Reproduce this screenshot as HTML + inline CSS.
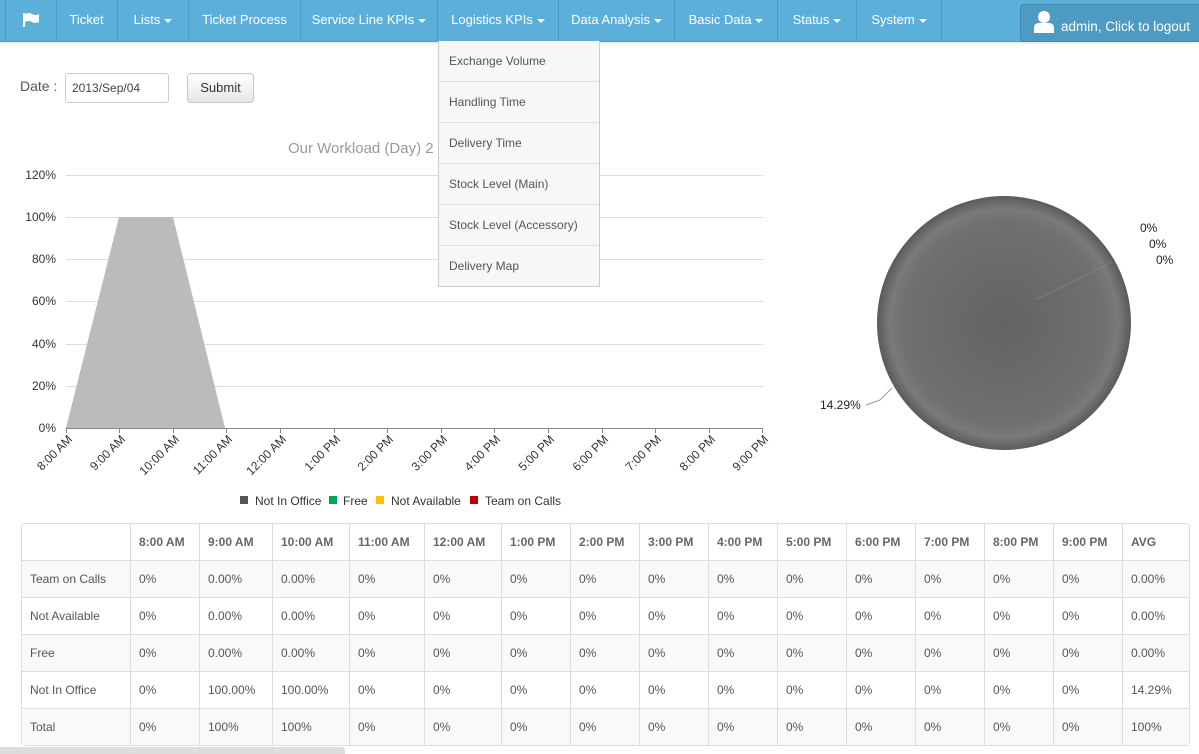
<!DOCTYPE html>
<html><head><meta charset="utf-8"><style>
body{margin:0;width:1199px;height:754px;overflow:hidden;background:#fff;font-family:"Liberation Sans",Arial,sans-serif;position:relative;font-size:12px;color:#555}
.nav{position:absolute;left:0;top:0;width:1199px;height:41px;background:#5cafd9;border-bottom:1px solid #4b9cc6;box-shadow:0 1px 3px rgba(0,0,0,.12);z-index:5}
.nav .it{position:absolute;top:0;height:40px;line-height:39px;color:#fff;font-size:13px;text-align:center;border-right:1px solid #4a9bc4}
.car{display:inline-block;width:0;height:0;border-left:4px solid transparent;border-right:4px solid transparent;border-top:4px solid #fff;vertical-align:middle;margin-left:4px}
.logout{position:absolute;left:1020px;top:4px;width:182px;height:36px;background:#4d9ac2;border:1px solid #3e88b0;border-radius:4px;color:#fff;font-size:13.5px}
.dd{position:absolute;left:438px;top:41px;width:160px;background:#f7f7f7;border:1px solid #ccc;border-top:none;z-index:10}
.dd div{height:40px;line-height:40px;padding-left:10px;border-bottom:1px solid #ddd;font-size:12px;color:#555}
.dd div:last-child{border-bottom:none}
table{position:absolute;left:21px;top:523px;border-collapse:separate;border-spacing:0;border:1px solid #ddd;border-radius:4px;font-size:12px;color:#555;table-layout:fixed}
td,th{border-left:1px solid #ddd;border-top:1px solid #ddd;height:37px;padding:0 0 0 8px;text-align:left;box-sizing:border-box}
th{border-top:none;height:36px;font-weight:bold;color:#666;}
tr td:first-child,tr th:first-child{border-left:none}
tbody tr:nth-child(odd) td{background:#f9f9f9}
</style></head><body>
<div class="nav">
<div class="it" style="border-left:1px solid #4a9bc4;left:5px;width:50px"><svg width="18" height="16" viewBox="0 0 18 16" style="vertical-align:middle;margin-top:-3px"><rect x="1" y="2" width="2" height="14" fill="#fff"/><path d="M3 3 Q7 1 10 3 T17 3 V11 Q13 13 10 11 T3 11Z" fill="#fff"/></svg></div>
<div class="it" style="left:56px;width:61px">Ticket</div>
<div class="it" style="left:118px;width:70px">Lists<span class="car"></span></div>
<div class="it" style="left:189px;width:111px">Ticket Process</div>
<div class="it" style="left:301px;width:136px">Service Line KPIs<span class="car"></span></div>
<div class="it" style="left:438px;width:120px">Logistics KPIs<span class="car"></span></div>
<div class="it" style="left:559px;width:115px">Data Analysis<span class="car"></span></div>
<div class="it" style="left:675px;width:102px">Basic Data<span class="car"></span></div>
<div class="it" style="left:778px;width:78px">Status<span class="car"></span></div>
<div class="it" style="left:857px;width:84px">System<span class="car"></span></div>
<div class="logout"><svg width="22" height="24" viewBox="0 0 22 24" style="position:absolute;left:12px;top:5px"><circle cx="11" cy="7" r="6" fill="#fff"/><path d="M1 23 V18 Q1 13 6 13 H16 Q21 13 21 18 V23Z" fill="#fff"/></svg><span style="position:absolute;left:40px;top:14px">admin, Click to logout</span></div>
</div>
<div class="dd"><div>Exchange Volume</div><div>Handling Time</div><div>Delivery Time</div><div>Stock Level (Main)</div><div>Stock Level (Accessory)</div><div>Delivery Map</div></div>
<div style="position:absolute;left:20px;top:78px;font-size:14px;color:#555">Date :</div>
<div style="position:absolute;left:65px;top:73px;width:104px;height:30px;border:1px solid #ccc;border-radius:3px;box-sizing:border-box;font-size:12px;line-height:28px;padding-left:6px;color:#444">2013/Sep/04</div>
<div style="position:absolute;left:187px;top:73px;width:67px;height:30px;border:1px solid #c5c5c5;border-radius:4px;box-sizing:border-box;background:linear-gradient(#fff,#e6e6e6);font-size:13px;line-height:28px;text-align:center;color:#333">Submit</div>
<svg style="position:absolute;left:0;top:120px" width="800" height="400" viewBox="0 120 800 400" font-family="Liberation Sans,Arial,sans-serif">
<text x="288" y="153" font-size="15" fill="#999">Our Workload (Day) 2</text>
<g stroke="#ddd" stroke-width="1">
<line x1="66" y1="175.5" x2="763" y2="175.5"/><line x1="66" y1="217.5" x2="763" y2="217.5"/><line x1="66" y1="259.5" x2="763" y2="259.5"/><line x1="66" y1="301.5" x2="763" y2="301.5"/><line x1="66" y1="344.5" x2="763" y2="344.5"/><line x1="66" y1="386.5" x2="763" y2="386.5"/></g>
<polygon points="66,428 119,217 173,217 225,428" fill="#bbb"/>
<line x1="66" y1="428.5" x2="763" y2="428.5" stroke="#888"/>
<g font-size="12" fill="#333" text-anchor="end">
<text x="56" y="179">120%</text><text x="56" y="221">100%</text><text x="56" y="263">80%</text><text x="56" y="305">60%</text><text x="56" y="348">40%</text><text x="56" y="390">20%</text><text x="56" y="432">0%</text></g>
<g stroke="#888"><line x1="66.5" y1="428" x2="66.5" y2="433"/><line x1="119.5" y1="428" x2="119.5" y2="433"/><line x1="173.5" y1="428" x2="173.5" y2="433"/><line x1="226.5" y1="428" x2="226.5" y2="433"/><line x1="280.5" y1="428" x2="280.5" y2="433"/><line x1="334.5" y1="428" x2="334.5" y2="433"/><line x1="387.5" y1="428" x2="387.5" y2="433"/><line x1="441.5" y1="428" x2="441.5" y2="433"/><line x1="494.5" y1="428" x2="494.5" y2="433"/><line x1="548.5" y1="428" x2="548.5" y2="433"/><line x1="602.5" y1="428" x2="602.5" y2="433"/><line x1="655.5" y1="428" x2="655.5" y2="433"/><line x1="709.5" y1="428" x2="709.5" y2="433"/><line x1="762.5" y1="428" x2="762.5" y2="433"/></g>
<g font-size="12" fill="#333" text-anchor="end">
<text transform="translate(73,440) rotate(-45)">8:00 AM</text>
<text transform="translate(126,440) rotate(-45)">9:00 AM</text>
<text transform="translate(180,440) rotate(-45)">10:00 AM</text>
<text transform="translate(233,440) rotate(-45)">11:00 AM</text>
<text transform="translate(287,440) rotate(-45)">12:00 AM</text>
<text transform="translate(341,440) rotate(-45)">1:00 PM</text>
<text transform="translate(394,440) rotate(-45)">2:00 PM</text>
<text transform="translate(448,440) rotate(-45)">3:00 PM</text>
<text transform="translate(501,440) rotate(-45)">4:00 PM</text>
<text transform="translate(555,440) rotate(-45)">5:00 PM</text>
<text transform="translate(609,440) rotate(-45)">6:00 PM</text>
<text transform="translate(662,440) rotate(-45)">7:00 PM</text>
<text transform="translate(716,440) rotate(-45)">8:00 PM</text>
<text transform="translate(769,440) rotate(-45)">9:00 PM</text></g>
<g font-size="12" fill="#333">
<rect x="240" y="496" width="8" height="8" fill="#555"/><text x="255" y="505">Not In Office</text>
<rect x="329" y="496" width="8" height="8" fill="#00a651"/><text x="343" y="505">Free</text>
<rect x="376" y="496" width="8" height="8" fill="#ffc000"/><text x="391" y="505">Not Available</text>
<rect x="470" y="496" width="8" height="8" fill="#c00000"/><text x="485" y="505">Team on Calls</text></g>
</svg>
<svg style="position:absolute;left:800px;top:190px" width="399" height="270" font-family="Liberation Sans,Arial,sans-serif">
<defs><radialGradient id="g" cx="50%" cy="50%" r="50%"><stop offset="0" stop-color="#636363"/><stop offset="0.8" stop-color="#707070"/><stop offset="0.9" stop-color="#7a7a7a"/><stop offset="1" stop-color="#5a5a5a"/></radialGradient></defs>
<circle cx="204" cy="133" r="127" fill="url(#g)"/>
<line x1="235" y1="110" x2="312" y2="72" stroke="#888" stroke-width="0.6"/>
<polyline points="66,215 80,210 92,198" fill="none" stroke="#999"/>
<g font-size="12" fill="#222"><text x="340" y="42">0%</text><text x="349" y="58">0%</text><text x="356" y="74">0%</text><text x="20" y="219">14.29%</text></g>
</svg>
<table>
<thead><tr><th style="width:108px"></th><th style="width:69px">8:00 AM</th><th style="width:73px">9:00 AM</th><th style="width:77px">10:00 AM</th><th style="width:75px">11:00 AM</th><th style="width:77px">12:00 AM</th><th style="width:69px">1:00 PM</th><th style="width:69px">2:00 PM</th><th style="width:69px">3:00 PM</th><th style="width:69px">4:00 PM</th><th style="width:69px">5:00 PM</th><th style="width:69px">6:00 PM</th><th style="width:69px">7:00 PM</th><th style="width:69px">8:00 PM</th><th style="width:69px">9:00 PM</th><th style="width:67px">AVG</th></tr></thead>
<tbody>
<tr><td>Team on Calls</td><td>0%</td><td>0.00%</td><td>0.00%</td><td>0%</td><td>0%</td><td>0%</td><td>0%</td><td>0%</td><td>0%</td><td>0%</td><td>0%</td><td>0%</td><td>0%</td><td>0%</td><td>0.00%</td></tr>
<tr><td>Not Available</td><td>0%</td><td>0.00%</td><td>0.00%</td><td>0%</td><td>0%</td><td>0%</td><td>0%</td><td>0%</td><td>0%</td><td>0%</td><td>0%</td><td>0%</td><td>0%</td><td>0%</td><td>0.00%</td></tr>
<tr><td>Free</td><td>0%</td><td>0.00%</td><td>0.00%</td><td>0%</td><td>0%</td><td>0%</td><td>0%</td><td>0%</td><td>0%</td><td>0%</td><td>0%</td><td>0%</td><td>0%</td><td>0%</td><td>0.00%</td></tr>
<tr><td>Not In Office</td><td>0%</td><td>100.00%</td><td>100.00%</td><td>0%</td><td>0%</td><td>0%</td><td>0%</td><td>0%</td><td>0%</td><td>0%</td><td>0%</td><td>0%</td><td>0%</td><td>0%</td><td>14.29%</td></tr>
<tr><td>Total</td><td>0%</td><td>100%</td><td>100%</td><td>0%</td><td>0%</td><td>0%</td><td>0%</td><td>0%</td><td>0%</td><td>0%</td><td>0%</td><td>0%</td><td>0%</td><td>0%</td><td>100%</td></tr>
</tbody></table>
<div style="position:absolute;left:0;top:747px;width:345px;height:7px;background:#ddd;border-radius:0 3px 0 0"></div>
</body></html>
